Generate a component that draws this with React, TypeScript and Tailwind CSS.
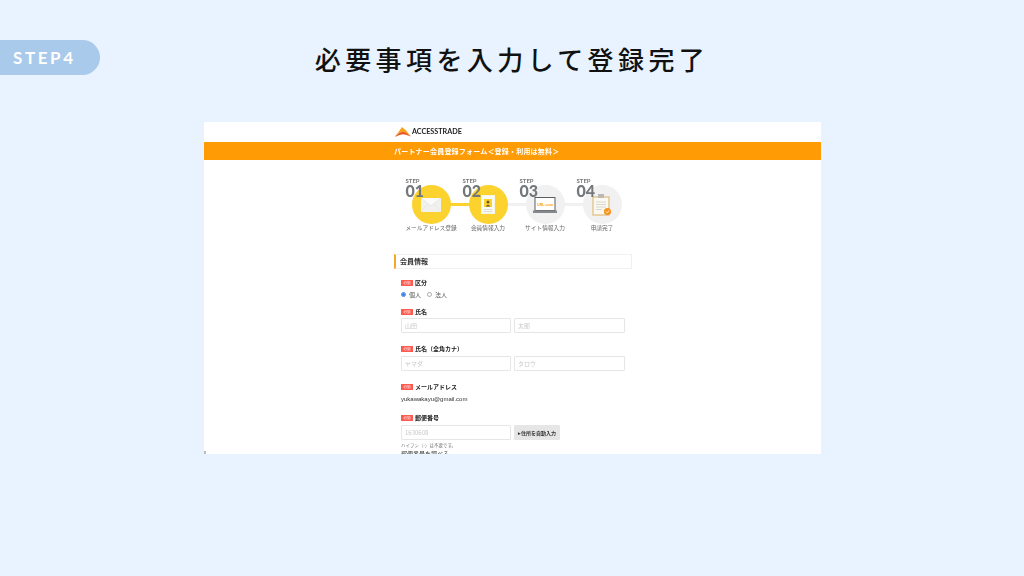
import type { ReactNode } from "react";

const jp = "font-['Noto_Sans_CJK_JP','Noto_Sans',sans-serif]";

const Logo = () => (
	<svg viewBox="0 0 17 10" className="w-[17px] h-[10px]">
		<path d="M0 10 L4.5 5 L8 0 L12 3.5 L17 9.5 L12.5 6.2 Q8 3.6 4 6.6 Z" fill="#f9a11b" />
		<path d="M1 10 Q7 2.5 13 6.4 L17 9.5 L11 7.6 Q7 6.6 1 10 Z" fill="#e8531f" />
	</svg>
);

const MailIcon = () => (
	<svg viewBox="0 0 20 14" className="w-[20px] h-[14px]">
		<rect width="20" height="14" fill="#f1f1ee" />
		<path d="M0 0 L10 8 L20 0" fill="#fafafa" stroke="#dcdcd6" strokeWidth="0.6" />
		<path d="M0 14 L7 6 M20 14 L13 6" stroke="#dcdcd6" strokeWidth="0.5" />
	</svg>
);

const ProfileIcon = () => (
	<svg viewBox="0 0 14 19" className="w-[14px] h-[19px]">
		<rect width="14" height="19" fill="#fbfbf6" stroke="#e6e0c4" strokeWidth="0.5" />
		<rect x="3" y="4" width="8" height="8" fill="#fcd22f" />
		<circle cx="7" cy="7" r="1.5" fill="#6b5a2a" />
		<path d="M4.5 11.5 Q7 8 9.5 11.5 Z" fill="#6b5a2a" />
		<path d="M2.5 14.5 H11.5 M2.5 16.5 H11.5" stroke="#cfcfc8" strokeWidth="0.7" />
	</svg>
);

const LaptopIcon = () => (
	<svg viewBox="0 0 24 16" className="w-[24px] h-[16px]">
		<rect x="2" y="0.5" width="20" height="13" fill="#fff" stroke="#5b5f64" />
		<text x="12" y="8.6" textAnchor="middle" fontSize="3.6" fontWeight="700" fill="#f7a01c" fontFamily="Liberation Sans">
			URL.com
		</text>
		<rect y="13.5" width="24" height="2.5" fill="#85898d" />
	</svg>
);

const ClipboardIcon = () => (
	<svg viewBox="0 0 20 23" className="w-[20px] h-[23px]">
		<rect x="1" y="4" width="16" height="18" fill="#fbf8ef" stroke="#e3bd7a" strokeWidth="1.2" />
		<rect x="6" y="1" width="6" height="4" fill="#b9b9b6" />
		<path d="M4 9 H14 M4 11.5 H14 M4 14 H14 M4 16.5 H10" stroke="#cfcfcb" strokeWidth="0.8" />
		<circle cx="15.5" cy="18.5" r="3.6" fill="#f7941d" />
		<path d="M13.8 18.5 L15.1 19.8 L17.3 17.4" fill="none" stroke="#fff" strokeWidth="0.9" />
	</svg>
);

const steps = [
	{ no: "01", label: "メールアドレス登録", active: true, icon: <MailIcon /> },
	{ no: "02", label: "会員情報入力", active: true, icon: <ProfileIcon /> },
	{ no: "03", label: "サイト情報入力", active: false, icon: <LaptopIcon /> },
	{ no: "04", label: "申請完了", active: false, icon: <ClipboardIcon /> },
];

const Steps = () => (
	<div className="flex h-[94px] pt-[25px] pl-[8.5px]">
		{steps.map((s, i) => (
			<div key={s.no} className="relative w-[57px] shrink-0 flex flex-col items-center">
				{i < 3 && (
					<div
						className={
							i === 0
								? "absolute left-[28px] top-[18px] w-[57px] h-[3px] bg-[#fcd22f]"
								: "absolute left-[28px] top-[18px] w-[57px] h-[3px] bg-[#f1f1f1]"
						}
					/>
				)}
				<div
					className={
						s.active
							? "relative w-[39px] h-[39px] rounded-full bg-[#fcd22f] flex items-center justify-center"
							: "relative w-[39px] h-[39px] rounded-full bg-[#f1f1f1] flex items-center justify-center"
					}
				>
					{s.icon}
				</div>
				<div className="absolute left-[3px] -top-[7px] font-['Lato',sans-serif] font-bold text-[#75787b]">
					<div className="text-[6px] leading-[6px]">STEP</div>
					<div className="text-[16px] leading-[14px] font-black">{s.no}</div>
				</div>
				<div className="text-[5.7px] leading-[8px] whitespace-nowrap text-[#666]">{s.label}</div>
			</div>
		))}
	</div>
);

const Label = ({ children }: { children: ReactNode }) => (
	<div className="flex items-center gap-[2px] h-[8px]">
		<span className="w-[12px] h-[6px] bg-[#ff5a4f] text-white text-[3.5px] leading-[6px] text-center">必須</span>
		<span className="text-[6px] leading-[8px] font-bold text-[#222]">{children}</span>
	</div>
);

const Input = ({ placeholder, w }: { placeholder: string; w: string }) => (
	<div className={`${w} h-[15px] border border-[#e6e6e6] rounded-[1px] px-[3px] text-[6px] leading-[13px] text-[#c8c8c8]`}>
		{placeholder}
	</div>
);

const App = () => {
	return (
		<div className={`${jp} w-[1024px] h-[576px] overflow-hidden bg-[#e8f3ff] pt-[40px]`}>
			<div className="grid grid-cols-[100px_1fr_100px] grid-rows-[35px] items-start h-[35px]">
				<div className="h-[35px] rounded-r-[18px] bg-[#a9caea] pl-[13px] font-['Lato',sans-serif] font-bold text-[17px] leading-[35px] tracking-[2.6px] text-white">
					STEP4
				</div>
				<h1 className="h-[35px] pt-[1px] text-center text-[26px] leading-[35px] font-medium tracking-[4.4px] text-[#111] whitespace-nowrap">
					必要事項を入力して登録完了
				</h1>
				<div />
			</div>

			<div className="relative mt-[47px] ml-[204px] w-[617px] h-[332px] overflow-hidden bg-white blur-[0.3px]">
				<div className="h-[20px] pl-[190px] flex items-center gap-[1px]">
					<Logo />
					<span className="font-['Lato',sans-serif] font-bold text-[7.2px] text-[#222]">ACCESSTRADE</span>
				</div>
				<div className="h-[18px] pl-[190px] bg-[#ff9b05] text-white font-bold text-[7px] leading-[18px] tracking-[0.2px] whitespace-nowrap">
					パートナー会員登録フォーム＜登録・利用は無料＞
				</div>

				<div className="ml-[190px] w-[238px]">
					<Steps />

					<div className="h-[15px] border border-[#f0f0f0] border-l-2 border-l-[#f7a823] pl-[4px] text-[7px] leading-[13px] font-bold text-[#333]">
						会員情報
					</div>

					<div className="ml-[7px] pt-[10px] flex flex-col">
						<Label>区分</Label>
						<div className="mt-[3px] h-[8px] flex items-center text-[6px] text-[#555]">
							<span className="w-[5px] h-[5px] rounded-full border border-[#3b82f6] flex items-center justify-center mr-[3px]">
								<span className="w-[3px] h-[3px] rounded-full bg-[#2f7fe8]" />
							</span>
							<span className="mr-[6px]">個人</span>
							<span className="w-[5px] h-[5px] rounded-full border border-[#aaa] mr-[3px]" />
							<span>法人</span>
						</div>

						<div className="mt-[10px]">
							<Label>氏名</Label>
						</div>
						<div className="mt-[2px] flex gap-[3px]">
							<Input placeholder="山田" w="w-[110px]" />
							<Input placeholder="太郎" w="w-[111px]" />
						</div>

						<div className="mt-[12px]">
							<Label>氏名（全角カナ）</Label>
						</div>
						<div className="mt-[3px] flex gap-[3px]">
							<Input placeholder="ヤマダ" w="w-[110px]" />
							<Input placeholder="タロウ" w="w-[111px]" />
						</div>

						<div className="mt-[12px]">
							<Label>メールアドレス</Label>
						</div>
						<div className="mt-[3px] text-[6px] leading-[10px] text-[#333] font-['Liberation_Sans',sans-serif]">
							yukawakayu@gmail.com
						</div>

						<div className="mt-[10px]">
							<Label>郵便番号</Label>
						</div>
						<div className="mt-[3px] flex gap-[3px]">
							<Input placeholder="1630608" w="w-[110px]" />
							<div className="w-[46px] h-[15px] bg-[#e6e6e6] rounded-[1px] text-center text-[5px] leading-[15px] font-bold text-[#333]">
								▸住所を自動入力
							</div>
						</div>
						<div className="mt-[2px] text-[4.5px] leading-[6px] text-[#777]">ハイフン（-）は不要です。</div>
						<div className="mt-[2px] text-[6px] leading-[8px] text-[#333]">郵便番号を調べる</div>
					</div>
				</div>

				<div className="absolute left-0 bottom-0 w-[2px] h-[3px] bg-[#bbbbbb]" />
			</div>
		</div>
	);
};

export default App;
